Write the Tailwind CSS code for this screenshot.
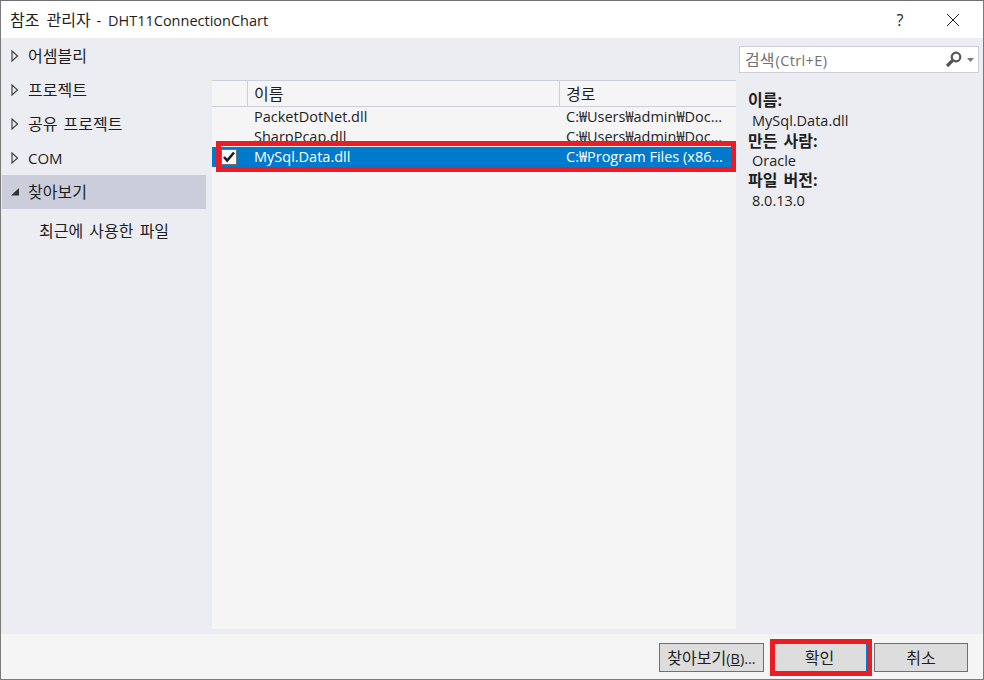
<!DOCTYPE html>
<html lang="ko">
<head>
    <meta charset="UTF-8">
    <title>참조 관리자</title>
    <script src="https://cdn.jsdelivr.net/npm/@tailwindcss/browser@4"></script>
</head>
<body class="bg-white">
<div class="relative w-[984px] h-[680px] overflow-hidden flex flex-col border border-[#7a7a7a] border-t-[#707070] bg-[#ecedf2] text-[#1e1e1e] text-[14.5px] font-['Open_Sans','Noto_Sans_CJK_KR',sans-serif]">

    <!-- title bar -->
    <div class="h-[37px] shrink-0 bg-white flex items-center pl-[9px]">
        <span class="flex-1 whitespace-nowrap"><span class="text-[16px] [word-spacing:3px]">참조 관리자</span><span class="ml-[2px]"> - </span><span class="ml-[3px]">DHT11ConnectionChart</span></span>
        <span class="w-4 text-center text-[16px] mr-[38px]">?</span>
        <svg class="w-[14px] h-[14px] mr-[23px]" viewBox="0 0 14 14" fill="none" stroke="#1e1e1e" stroke-width="1"><path d="M1 1l12 12M13 1L1 13"/></svg>
    </div>

    <!-- body -->
    <div class="flex-1 flex min-h-0">
        <!-- left nav -->
        <nav class="w-[211px] shrink-0 pt-[1px] pl-[1px] pr-[6px] text-[16px] [word-spacing:2px]">
            <div class="h-[34px] flex items-center gap-[9px] pl-[9px]"><svg class="w-[8px] h-[12px]" viewBox="0 0 8 12" fill="none" stroke="#444" stroke-width="1.2"><path d="M1 1l5.5 5L1 11z"/></svg><span>어셈블리</span></div>
            <div class="h-[34px] flex items-center gap-[9px] pl-[9px]"><svg class="w-[8px] h-[12px]" viewBox="0 0 8 12" fill="none" stroke="#444" stroke-width="1.2"><path d="M1 1l5.5 5L1 11z"/></svg><span>프로젝트</span></div>
            <div class="h-[34px] flex items-center gap-[9px] pl-[9px]"><svg class="w-[8px] h-[12px]" viewBox="0 0 8 12" fill="none" stroke="#444" stroke-width="1.2"><path d="M1 1l5.5 5L1 11z"/></svg><span>공유 프로젝트</span></div>
            <div class="h-[34px] flex items-center gap-[9px] pl-[9px]"><svg class="w-[8px] h-[12px]" viewBox="0 0 8 12" fill="none" stroke="#444" stroke-width="1.2"><path d="M1 1l5.5 5L1 11z"/></svg><span class="text-[15px]">COM</span></div>
            <div class="h-[34px] flex items-center gap-[9px] pl-[9px] bg-[#cbcdda]"><svg class="w-[8px] h-[12px]" viewBox="0 0 8 12" fill="#333"><path d="M0 9.5L8 2v7.5z"/></svg><span>찾아보기</span></div>
            <div class="h-[43px] flex items-center pl-[37px]">최근에 사용한 파일</div>
        </nav>

        <!-- reference list -->
        <div class="w-[524px] shrink-0 mt-[42px] mb-[5px] bg-[#f5f5f6] flex flex-col">
            <div class="h-[27px] shrink-0 flex border-y border-[#ccceDB] text-[16px]">
                <div class="w-[36px] border-r border-[#ccceDB]"></div>
                <div class="w-[312px] border-r border-[#ccceDB] pl-[6px] leading-[26px]">이름</div>
                <div class="flex-1 pl-[6px] leading-[26px]">경로</div>
            </div>
            <div class="h-[20px] flex items-center">
                <div class="w-[42px]"></div>
                <div class="w-[312px]">PacketDotNet.dll</div>
                <div class="flex-1 whitespace-nowrap">C:₩Users₩admin₩Doc...</div>
            </div>
            <div class="h-[20px] flex items-center">
                <div class="w-[42px]"></div>
                <div class="w-[312px]">SharpPcap.dll</div>
                <div class="flex-1 whitespace-nowrap">C:₩Users₩admin₩Doc...</div>
            </div>
            <div class="h-[20px] flex items-center bg-[#007acc] text-white">
                <div class="w-[42px] pl-[9px]">
                    <div class="w-[16px] h-[16px] bg-white border border-[#707070] flex items-center justify-center">
                        <svg class="w-[14px] h-[14px]" viewBox="0 0 14 14" fill="none" stroke="#1e1e1e" stroke-width="2.6"><path d="M2 7l3.2 3.6L12 2.5"/></svg>
                    </div>
                </div>
                <div class="w-[312px]">MySql.Data.dll</div>
                <div class="flex-1 whitespace-nowrap">C:₩Program Files (x86...</div>
            </div>
        </div>

        <!-- details -->
        <div class="flex-1 pl-[3px] pt-[8px]">
            <div class="w-[240px] h-[27px] bg-white border border-[#ccceDB] flex items-center pl-[5px] pr-[4px] text-[#717171]">
                <span class="flex-1 whitespace-nowrap"><span class="text-[16px]">검색</span><span class="ml-[1px] tracking-[0.4px]">(Ctrl+E)</span></span>
                <svg class="w-[17px] h-[17px]" viewBox="0 0 17 17" fill="none" stroke="#555" stroke-width="2.2"><circle cx="11" cy="6" r="4.3"/><path d="M7.5 9.5L2 15" stroke-width="3.2"/></svg>
                <svg class="w-[7px] h-[4px] ml-[5px]" viewBox="0 0 7 4" fill="#777"><path d="M0 0h7L3.5 4z"/></svg>
            </div>
            <div class="pl-[9px] pt-[17px] leading-[20px]">
                <div class="font-bold text-[16px] [word-spacing:2px]">이름:</div>
                <div class="pl-[4px] mt-[1px]">MySql.Data.dll</div>
                <div class="font-bold text-[16px] [word-spacing:2px]">만든 사람:</div>
                <div class="pl-[4px]">Oracle</div>
                <div class="font-bold text-[16px] [word-spacing:2px] -mt-[1px]">파일 버전:</div>
                <div class="pl-[4px] mt-[1px]">8.0.13.0</div>
            </div>
        </div>
    </div>

    <!-- footer buttons -->
    <div class="h-[45px] shrink-0 bg-[#f5f5f5] flex items-start justify-end pt-[8px] pr-[15px]">
        <button class="w-[105px] h-[29px] mt-[1px] bg-[#dddddd] border border-[#707070] whitespace-nowrap"><span class="text-[16px]">찾아보기</span>(<span class="underline">B</span>)...</button>
        <button class="w-[95px] h-[29px] mt-[1px] ml-[8px] bg-[#dddddd] border border-[#707070] border-r-[#007acc] text-[16px]">확인</button>
        <button class="w-[94px] h-[29px] mt-[1px] ml-[7px] bg-[#dddddd] border border-[#707070] text-[16px]">취소</button>
    </div>

    <!-- red annotation boxes -->
    <div class="absolute left-[215px] top-[140px] w-[520px] h-[31px] border-[5px] border-[#ed1c24]"></div>
    <div class="absolute left-[769px] top-[638px] w-[102px] h-[37px] border-[5px] border-[#ed1c24]"></div>
</div>
</body>
</html>
